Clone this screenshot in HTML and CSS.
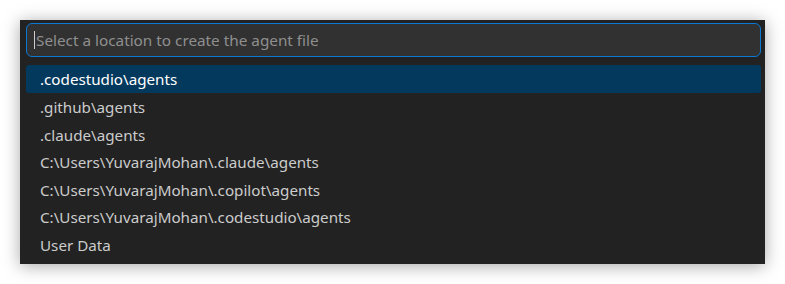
FILE: index.html
```html
<!DOCTYPE html>
<html lang="en">
<head>
    <meta charset="UTF-8">
    <title>Quick Pick</title>
    <link rel="stylesheet" href="styles.css">
</head>
<body>
    <div class="quick-pick">
        <div class="input-box">
            <span class="caret"></span>
            <span class="placeholder">Select a location to create the agent file</span>
        </div>
        <ul class="list">
            <li class="item selected">.codestudio\agents</li>
            <li class="item">.github\agents</li>
            <li class="item">.claude\agents</li>
            <li class="item">C:\Users\YuvarajMohan\.claude\agents</li>
            <li class="item">C:\Users\YuvarajMohan\.copilot\agents</li>
            <li class="item">C:\Users\YuvarajMohan\.codestudio\agents</li>
            <li class="item">User Data</li>
        </ul>
    </div>
</body>
</html>
```

FILE: styles.css
```css
body {
    margin: 0;
    background: #ffffff;
    font-family: "Noto Sans", "Open Sans", sans-serif;
}
.quick-pick {
    margin: 20px;
    width: 745px;
    height: 244px;
    box-sizing: border-box;
    background: #222222;
    padding: 3px 4px 0 6px;
    box-shadow: 0 2px 16px rgba(0, 0, 0, 0.35);
}
.input-box {
    height: 34px;
    box-sizing: border-box;
    background: #313131;
    border: 1px solid #0a78d4;
    border-radius: 6px;
    display: flex;
    align-items: center;
    padding-left: 7px;
}
.caret {
    width: 1px;
    height: 18px;
    background: #cccccc;
    margin-right: 1px;
}
.placeholder {
    color: #8f8f8f;
    font-size: 15.3px;
}
.list {
    list-style: none;
    margin: 8px 0 0;
    padding: 0;
}
.item {
    height: 27.5px;
    line-height: 28px;
    padding-left: 14px;
    color: #cccccc;
    font-size: 15.2px;
    border-radius: 3px;
}
.item.selected {
    background: #04395e;
    color: #ffffff;
    height: 28px;
}
```
